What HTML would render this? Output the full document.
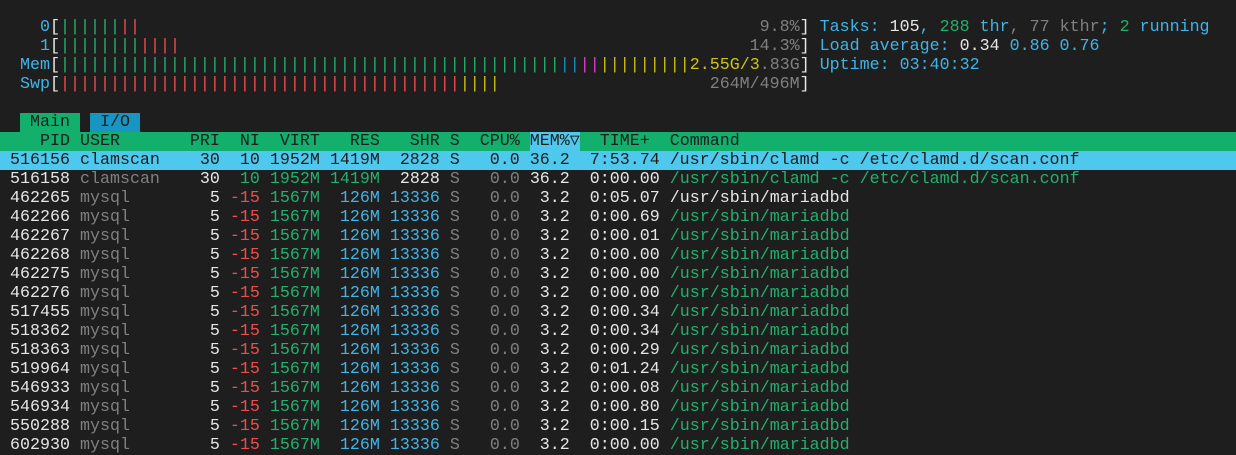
<!DOCTYPE html>
<html><head><meta charset="utf-8"><style>
html,body{margin:0;padding:0;background:#1e1e1e;width:1236px;height:454px;overflow:hidden}
.l{position:absolute;left:0;width:1236px;height:19px;white-space:pre;font-family:"Liberation Mono","DejaVu Sans Mono",monospace;font-size:16.667px;line-height:19px;color:#d4d4d4}
.w{color:#e6e6e6}.g{color:#808080}.r{color:#f14c4c}.gr{color:#23b06e}.c{color:#3fb4e6}.y{color:#cdc312}.b{color:#1a8fc0}.m{color:#e03ad0}
.hdr{background:#12b06c;color:#1e1e1e}
.sel{background:#4fc8ee;color:#1e1e1e}
.tab{background:#12b06c;color:#1e1e1e}
.tab2{background:#1796c4;color:#1e1e1e}
.ms{background:#4fc8ee}
</style></head><body>
<div class="l" style="top:18px"><span class="c">    0</span><span class="w">[</span><span class="gr">||||||</span><span class="r">||</span><span class="g">                                                              9.8%</span><span class="w">]</span> <span class="c">Tasks: </span><span class="w">105</span><span class="c">, </span><span class="gr">288</span><span class="c"> thr</span><span class="g">, 77 kthr</span><span class="c">; </span><span class="gr">2</span><span class="c"> running</span></div>
<div class="l" style="top:37px"><span class="c">    1</span><span class="w">[</span><span class="gr">||||||||</span><span class="r">||||</span><span class="g">                                                         14.3%</span><span class="w">]</span> <span class="c">Load average: </span><span class="w">0.34 </span><span class="c">0.86 0.76</span></div>
<div class="l" style="top:56px"><span class="c">  Mem</span><span class="w">[</span><span class="gr">||||||||||||||||||||||||||||||||||||||||||||||||||</span><span class="b">||</span><span class="m">||</span><span class="y">|||||||||2.55G/3</span><span class="g">.83G</span><span class="w">]</span> <span class="c">Uptime: 03:40:32</span></div>
<div class="l" style="top:75px"><span class="c">  Swp</span><span class="w">[</span><span class="r">||||||||||||||||||||||||||||||||||||||||</span><span class="y">||||</span><span class="g">                     264M/496M</span><span class="w">]</span></div>
<div class="l" style="top:113px">  <span class="tab"> Main </span> <span class="tab2"> I/O </span></div>
<div class="l hdr" style="top:132px">    PID USER       PRI  NI  VIRT   RES   SHR S  CPU% <span class="ms">MEM%▽</span>  TIME+  Command</div>
<div class="l sel" style="top:151px"> 516156 clamscan    30  10 1952M 1419M  2828 S   0.0 36.2  7:53.74 /usr/sbin/clamd -c /etc/clamd.d/scan.conf</div>
<div class="l" style="top:170px"><span class="w"> 516158 </span><span class="g">clamscan  </span><span class="w">  30 </span><span class="gr"> 10 1952M 1419M </span><span class="w"> 2828 </span><span class="g">S   0.0 </span><span class="w">36.2  0:00.00 </span><span class="gr">/usr/sbin/clamd -c /etc/clamd.d/scan.conf</span></div>
<div class="l" style="top:189px"><span class="w"> 462265 </span><span class="g">mysql     </span><span class="w">   5 </span><span class="r">-15 </span><span class="gr">1567M </span><span class="c"> 126M 13336 </span><span class="g">S   0.0 </span><span class="w"> 3.2  0:05.07 /usr/sbin/mariadbd</span></div>
<div class="l" style="top:208px"><span class="w"> 462266 </span><span class="g">mysql     </span><span class="w">   5 </span><span class="r">-15 </span><span class="gr">1567M </span><span class="c"> 126M 13336 </span><span class="g">S   0.0 </span><span class="w"> 3.2  0:00.69 </span><span class="gr">/usr/sbin/mariadbd</span></div>
<div class="l" style="top:227px"><span class="w"> 462267 </span><span class="g">mysql     </span><span class="w">   5 </span><span class="r">-15 </span><span class="gr">1567M </span><span class="c"> 126M 13336 </span><span class="g">S   0.0 </span><span class="w"> 3.2  0:00.01 </span><span class="gr">/usr/sbin/mariadbd</span></div>
<div class="l" style="top:246px"><span class="w"> 462268 </span><span class="g">mysql     </span><span class="w">   5 </span><span class="r">-15 </span><span class="gr">1567M </span><span class="c"> 126M 13336 </span><span class="g">S   0.0 </span><span class="w"> 3.2  0:00.00 </span><span class="gr">/usr/sbin/mariadbd</span></div>
<div class="l" style="top:265px"><span class="w"> 462275 </span><span class="g">mysql     </span><span class="w">   5 </span><span class="r">-15 </span><span class="gr">1567M </span><span class="c"> 126M 13336 </span><span class="g">S   0.0 </span><span class="w"> 3.2  0:00.00 </span><span class="gr">/usr/sbin/mariadbd</span></div>
<div class="l" style="top:284px"><span class="w"> 462276 </span><span class="g">mysql     </span><span class="w">   5 </span><span class="r">-15 </span><span class="gr">1567M </span><span class="c"> 126M 13336 </span><span class="g">S   0.0 </span><span class="w"> 3.2  0:00.00 </span><span class="gr">/usr/sbin/mariadbd</span></div>
<div class="l" style="top:303px"><span class="w"> 517455 </span><span class="g">mysql     </span><span class="w">   5 </span><span class="r">-15 </span><span class="gr">1567M </span><span class="c"> 126M 13336 </span><span class="g">S   0.0 </span><span class="w"> 3.2  0:00.34 </span><span class="gr">/usr/sbin/mariadbd</span></div>
<div class="l" style="top:322px"><span class="w"> 518362 </span><span class="g">mysql     </span><span class="w">   5 </span><span class="r">-15 </span><span class="gr">1567M </span><span class="c"> 126M 13336 </span><span class="g">S   0.0 </span><span class="w"> 3.2  0:00.34 </span><span class="gr">/usr/sbin/mariadbd</span></div>
<div class="l" style="top:341px"><span class="w"> 518363 </span><span class="g">mysql     </span><span class="w">   5 </span><span class="r">-15 </span><span class="gr">1567M </span><span class="c"> 126M 13336 </span><span class="g">S   0.0 </span><span class="w"> 3.2  0:00.29 </span><span class="gr">/usr/sbin/mariadbd</span></div>
<div class="l" style="top:360px"><span class="w"> 519964 </span><span class="g">mysql     </span><span class="w">   5 </span><span class="r">-15 </span><span class="gr">1567M </span><span class="c"> 126M 13336 </span><span class="g">S   0.0 </span><span class="w"> 3.2  0:01.24 </span><span class="gr">/usr/sbin/mariadbd</span></div>
<div class="l" style="top:379px"><span class="w"> 546933 </span><span class="g">mysql     </span><span class="w">   5 </span><span class="r">-15 </span><span class="gr">1567M </span><span class="c"> 126M 13336 </span><span class="g">S   0.0 </span><span class="w"> 3.2  0:00.08 </span><span class="gr">/usr/sbin/mariadbd</span></div>
<div class="l" style="top:398px"><span class="w"> 546934 </span><span class="g">mysql     </span><span class="w">   5 </span><span class="r">-15 </span><span class="gr">1567M </span><span class="c"> 126M 13336 </span><span class="g">S   0.0 </span><span class="w"> 3.2  0:00.80 </span><span class="gr">/usr/sbin/mariadbd</span></div>
<div class="l" style="top:417px"><span class="w"> 550288 </span><span class="g">mysql     </span><span class="w">   5 </span><span class="r">-15 </span><span class="gr">1567M </span><span class="c"> 126M 13336 </span><span class="g">S   0.0 </span><span class="w"> 3.2  0:00.15 </span><span class="gr">/usr/sbin/mariadbd</span></div>
<div class="l" style="top:436px"><span class="w"> 602930 </span><span class="g">mysql     </span><span class="w">   5 </span><span class="r">-15 </span><span class="gr">1567M </span><span class="c"> 126M 13336 </span><span class="g">S   0.0 </span><span class="w"> 3.2  0:00.00 </span><span class="gr">/usr/sbin/mariadbd</span></div>
</body></html>
